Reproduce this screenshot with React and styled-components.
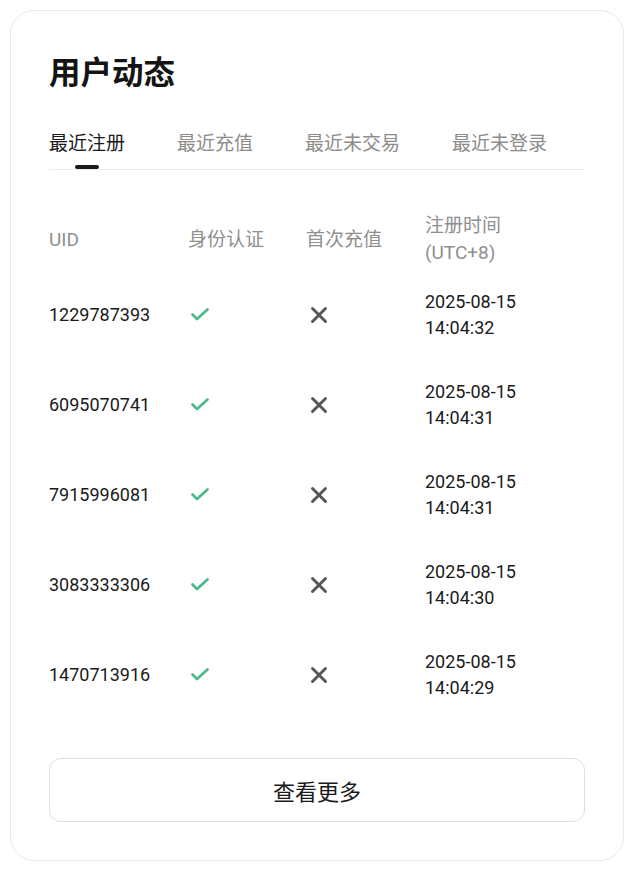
import React, { useState } from 'react';
import styled, { createGlobalStyle } from 'styled-components';

const GlobalStyle = createGlobalStyle`
  body {
    margin: 0;
    background: #ffffff;
    font-family: Roboto, "Noto Sans CJK SC", sans-serif;
  }
`;

const tabs = ['最近注册', '最近充值', '最近未交易', '最近未登录'];

const rows = [
  { uid: '1229787393', verified: true, deposited: false, date: '2025-08-15', time: '14:04:32' },
  { uid: '6095070741', verified: true, deposited: false, date: '2025-08-15', time: '14:04:31' },
  { uid: '7915996081', verified: true, deposited: false, date: '2025-08-15', time: '14:04:31' },
  { uid: '3083333306', verified: true, deposited: false, date: '2025-08-15', time: '14:04:30' },
  { uid: '1470713916', verified: true, deposited: false, date: '2025-08-15', time: '14:04:29' },
];

const CheckIcon = () => (
  <svg width="24" height="24" viewBox="0 0 24 24" fill="none">
    <polyline points="4.5,11.5 9,16 19.5,6.5" stroke="#4cba8b" strokeWidth="2.8" strokeLinecap="round" strokeLinejoin="round" />
  </svg>
);

const CrossIcon = () => (
  <svg width="24" height="24" viewBox="0 0 24 24" fill="none">
    <path d="M5.5 5.5 L18.5 18.5 M18.5 5.5 L5.5 18.5" stroke="#555555" strokeWidth="2.9" strokeLinecap="round" />
  </svg>
);

const App = () => {
  const [active, setActive] = useState(0);

  return (
    <Page>
      <GlobalStyle />
      <Card>
        <Title>用户动态</Title>
        <TabBar>
          {tabs.map((tab, i) => (
            <Tab key={tab} $active={i === active} onClick={() => setActive(i)}>
              <span>{tab}</span>
              <Indicator $active={i === active} />
            </Tab>
          ))}
        </TabBar>
        <HeaderRow>
          <HeadCell>UID</HeadCell>
          <HeadCell>身份认证</HeadCell>
          <HeadCell>首次充值</HeadCell>
          <HeadCell>注册时间<br />(UTC+8)</HeadCell>
        </HeaderRow>
        {rows.map(row => (
          <DataRow key={row.uid}>
            <Cell>{row.uid}</Cell>
            <IconCell $offset={0}>{row.verified ? <CheckIcon /> : <CrossIcon />}</IconCell>
            <IconCell $offset={1}>{row.deposited ? <CheckIcon /> : <CrossIcon />}</IconCell>
            <Cell>{row.date}<br />{row.time}</Cell>
          </DataRow>
        ))}
        <MoreButton>查看更多</MoreButton>
      </Card>
    </Page>
  );
};

export default App;

const Page = styled.div`
  padding: 10px;
`;

const Card = styled.div`
  border: 1px solid #e8e8e8;
  border-radius: 24px;
  padding: 43px 38px 38px;
  background: #fff;
`;

const Title = styled.h1`
  margin: 0;
  font-size: 31.5px;
  line-height: 40px;
  font-weight: 700;
  color: #141414;
`;

const TabBar = styled.div`
  display: flex;
  gap: 52px;
  margin-top: 36px;
  border-bottom: 1px solid #ebebeb;
`;

const Tab = styled.div`
  display: flex;
  flex-direction: column;
  align-items: center;
  gap: 8px;
  font-size: 19px;
  line-height: 27px;
  color: ${props => (props.$active ? '#1a1a1a' : '#8c8c8c')};
  cursor: pointer;
`;

const Indicator = styled.div`
  width: 24px;
  height: 4px;
  border-radius: 2px;
  background: ${props => (props.$active ? '#1a1a1a' : 'transparent')};
`;

const Grid = styled.div`
  display: grid;
  grid-template-columns: 139px 118px 119px 1fr;
  align-items: center;
`;

const HeaderRow = styled(Grid)`
  padding: 42px 0 4.5px;
`;

const HeadCell = styled.div`
  font-size: 19px;
  line-height: 27px;
  color: #8f8f8f;
`;

const DataRow = styled(Grid)`
  padding: 18.9px 0;
`;

const Cell = styled.div`
  font-size: 18px;
  line-height: 26px;
  color: #1a1a1a;
`;

const IconCell = styled.div`
  display: flex;
  align-items: center;
  height: 26px;
  margin-left: ${props => props.$offset}px;
`;

const MoreButton = styled.button`
  display: block;
  width: 100%;
  height: 64px;
  margin-top: 38.5px;
  border: 1px solid #dedede;
  border-radius: 12px;
  background: #fff;
  font-family: Roboto, "Noto Sans CJK SC", sans-serif;
  font-size: 22px;
  color: #1a1a1a;
  cursor: pointer;
`;
